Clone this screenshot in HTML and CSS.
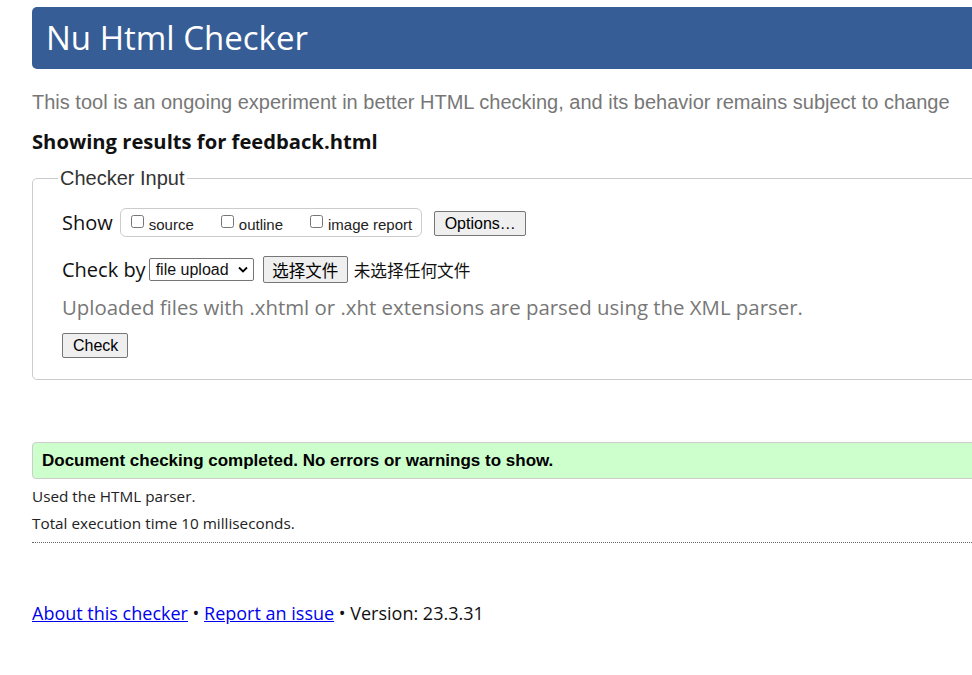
FILE: index.html
```html
<!DOCTYPE html>
<html lang="en">
<head>
<meta charset="utf-8">
<title>Nu Html Checker</title>
<link rel="stylesheet" href="styles.css">
</head>
<body>
<div class="page">
  <h1 class="banner">Nu Html Checker</h1>
  <p class="tagline">This tool is an ongoing experiment in better HTML checking, and its behavior remains subject to change</p>
  <h2 class="showing">Showing results for feedback.html</h2>
  <fieldset class="input">
    <legend class="legend">Checker Input</legend>
    <div class="row show-row">
      <span class="label">Show</span>
      <span class="opts">
        <label class="opt"><input type="checkbox" class="cb"><span>source</span></label>
        <label class="opt"><input type="checkbox" class="cb"><span>outline</span></label>
        <label class="opt"><input type="checkbox" class="cb"><span>image report</span></label>
      </span>
      <button type="button" class="btn btn-opts">Options…</button>
    </div>
    <div class="row by-row">
      <span class="label">Check by</span>
      <span class="select">file upload<svg class="caret" width="10" height="7" viewBox="0 0 10 7"><path d="M1 1.5 L5 5.5 L9 1.5" fill="none" stroke="#000" stroke-width="1.8"/></svg></span>
      <button type="button" class="btn btn-file">选择文件</button>
      <span class="nofile">未选择任何文件</span>
    </div>
    <p class="hint">Uploaded files with .xhtml or .xht extensions are parsed using the XML parser.</p>
    <button type="button" class="btn btn-check">Check</button>
  </fieldset>
  <div class="success">Document checking completed. No errors or warnings to show.</div>
  <p class="meta">Used the HTML parser.</p>
  <p class="meta">Total execution time 10 milliseconds.</p>
  <hr class="sep">
  <p class="footer"><a href="#">About this checker</a> • <a href="#">Report an issue</a> • Version: 23.3.31</p>
</div>
</body>
</html>
```
FILE: styles.css
```css
html { overflow: hidden; }
body {
  margin: 0;
  font-family: "Open Sans", "Noto Sans", sans-serif;
  color: #111;
  background: #fff;
}
.page {
  width: 1000px;
  padding: 7px 0 0 32px;
}
.banner {
  margin: 0;
  height: 62px;
  box-sizing: border-box;
  background: #365d95;
  color: #fff;
  border-radius: 5px;
  font-weight: 400;
  font-size: 33px;
  line-height: 62px;
  padding-left: 14px;
}
.tagline {
  margin: 21px 0 0;
  font-family: "Liberation Sans", Arial, sans-serif;
  font-size: 20px;
  line-height: 24px;
  color: #777;
}
.showing {
  margin: 13px 0 0;
  font-size: 20.2px;
  font-weight: 700;
  line-height: 28px;
  color: #111;
}
.input {
  margin: 12px 0 0;
  border: 1px solid #ccc;
  border-radius: 5px;
  padding: 18px 29px 21px;
}
.legend {
  font-family: "Liberation Sans", Arial, sans-serif;
  font-size: 20px;
  color: #333;
  padding: 0 2px;
  margin-left: -4px;
}
.row {
  display: flex;
  align-items: center;
}
.label {
  font-size: 20px;
  color: #111;
}
.opts {
  display: inline-flex;
  align-items: center;
  border: 1px solid #ccc;
  border-radius: 6px;
  height: 29px;
  box-sizing: border-box;
  margin-left: 7px;
  padding: 0 9px 0 10px;
  gap: 27px;
}
.opt {
  display: inline-flex;
  align-items: center;
  font-family: "Liberation Sans", Arial, sans-serif;
  font-size: 15px;
  color: #222;
  padding-top: 3px;
}
.cb {
  margin: 0 5px 5px 0;
  width: 13px;
  height: 13px;
}
.btn {
  font-family: "Liberation Sans", Arial, sans-serif;
  font-size: 16px;
  color: #000;
  background: #efefef;
  border: 1px solid #767676;
  border-radius: 2px;
  padding: 0 9px;
  height: 25px;
}
.btn-opts { margin-left: 12px; width: 92px; margin-top: 2px; }
.by-row { margin-top: 19px; }
.select {
  display: inline-flex;
  align-items: center;
  font-family: "Liberation Sans", Arial, sans-serif;
  font-size: 16px;
  border: 1px solid #767676;
  border-radius: 2px;
  width: 105px;
  height: 23px;
  box-sizing: border-box;
  padding: 0 5px 0 6px;
  margin-left: 3px;
  justify-content: space-between;
}
.btn-file {
  margin-left: 9px;
  height: 27px;
  font-family: "Noto Sans CJK SC", sans-serif;
  font-size: 16.5px;
  padding: 0 8px;
  width: 85px;
}
.nofile {
  margin-left: 6px;
  font-family: "Noto Sans CJK SC", sans-serif;
  font-size: 16.7px;
}
.hint {
  margin: 10px 0 0;
  font-size: 20.4px;
  line-height: 28px;
  color: #777;
}
.btn-check {
  margin-top: 12px;
  padding: 0 10px;
  width: 66px;
}
.success {
  margin-top: 62px;
  background: #ccffcc;
  border: 1px solid #ccc;
  border-radius: 4px;
  height: 37px;
  box-sizing: border-box;
  padding-left: 9px;
  font-family: "Liberation Sans", Arial, sans-serif;
  font-weight: 700;
  font-size: 17px;
  line-height: 35px;
  color: #000;
}
.meta {
  margin: 8px 0 0;
  font-size: 15.3px;
  line-height: 19px;
  color: #222;
}
.meta + .meta { margin-top: 8px; }
.sep {
  margin: 9px 0 0;
  border: 0;
  border-top: 1px dotted #666;
}
.footer {
  margin: 58px 0 0;
  font-size: 18px;
  color: #111;
}
.footer a { color: #00e; }
```
